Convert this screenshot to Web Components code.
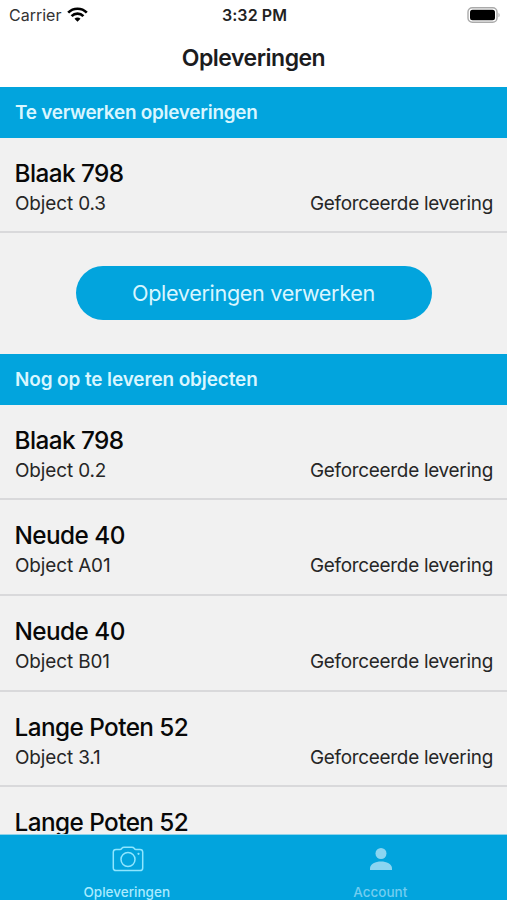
<!DOCTYPE html>
<html lang="nl">
<head>
<meta charset="utf-8">
<title>Opleveringen</title>
<style>
    html, body {
        margin: 0;
        height: 100%;
        overflow: hidden;
    }
    body {
        font-family: Inter, "Liberation Sans", sans-serif;
        color: #111;
        background: #f1f1f1;
        --blauw: #02a4dd;
    }
</style>
</head>
<body>
<oplever-app>
    <status-balk slot="top" carrier="Carrier" tijd="3:32 PM"></status-balk>
    <titel-balk slot="top">Opleveringen</titel-balk>

    <sectie-kop style="letter-spacing: -0.24px">Te verwerken opleveringen</sectie-kop>
    <object-rij adres="Blaak 798" object="Object 0.3">Geforceerde levering</object-rij>
    <verwerk-knop>Opleveringen verwerken</verwerk-knop>

    <sectie-kop>Nog op te leveren objecten</sectie-kop>
    <object-rij adres="Blaak 798" object="Object 0.2">Geforceerde levering</object-rij>
    <object-rij adres="Neude 40" object="Object A01">Geforceerde levering</object-rij>
    <object-rij adres="Neude 40" object="Object B01">Geforceerde levering</object-rij>
    <object-rij adres="Lange Poten 52" object="Object 3.1">Geforceerde levering</object-rij>
    <object-rij adres="Lange Poten 52"></object-rij>

    <tab-balk slot="tabs">
        <tab-item actief>
            <svg slot="icoon" width="34" height="26" viewBox="-2 0 34 26" fill="none" stroke="#8fe6ff" stroke-width="1.5" stroke-linejoin="round">
                <path d="M4 3.400h4.300c1 0 1.300-.4 1.700-1.200.5-.8.9-1 2-1h8c1.100 0 1.500.2 2 1 .4.800.7 1.200 1.700 1.200H28c1.700 0 2.700 1 2.700 2.700v15.800c0 1.700-1 2.700-2.700 2.700H4c-1.700 0-2.700-1-2.700-2.700V6.100C1.300 4.400 2.300 3.400 4 3.400z"/>
                <circle cx="16" cy="13.500" r="7"/>
                <circle cx="26.500" cy="7.800" r="1.100" fill="#8fe6ff" stroke="none"/>
            </svg>
            Opleveringen
        </tab-item>
        <tab-item>
            <svg slot="icoon" width="34" height="26" viewBox="-2 0 34 26" fill="#8bd5f1">
                <circle cx="16" cy="7.500" r="5.500"/>
                <path d="M5 24v-1.700c0-4.100 5.500-6.700 11-6.700s11 2.600 11 6.700V24z"/>
            </svg>
            Account
        </tab-item>
    </tab-balk>
</oplever-app>

<script>
class OpleverApp extends HTMLElement {

    constructor() {
        super();
        const shadow = this.attachShadow({ mode: 'open' });
        shadow.innerHTML = `
            <style>
                :host {
                    display: flex;
                    flex-direction: column;
                    height: 100vh;
                    overflow: hidden;
                }
                .top, .tabs {
                    flex: none;
                }
                .lijst {
                    flex: 1;
                    min-height: 0;
                    overflow: hidden;
                }
            </style>
            <div class="top"><slot name="top"></slot></div>
            <div class="lijst"><slot></slot></div>
            <div class="tabs"><slot name="tabs"></slot></div>
        `;
    }

}

customElements.define('oplever-app', OpleverApp);


class StatusBalk extends HTMLElement {

    connectedCallback() {
        const shadow = this.attachShadow({ mode: 'open' });
        shadow.innerHTML = `
            <style>
                :host {
                    display: grid;
                    grid-template-columns: 1fr auto 1fr;
                    align-items: center;
                    box-sizing: border-box;
                    height: 28px;
                    padding: 1px 7px 0 9px;
                    background: #fff;
                    font-size: 16px;
                    line-height: 20px;
                }
                .links {
                    display: flex;
                    align-items: center;
                    gap: 6px;
                    color: #333;
                }
                .links svg {
                    margin-bottom: 1px;
                }
                .tijd {
                    font-weight: 600;
                    letter-spacing: 0.1px;
                    color: #222;
                }
                .rechts {
                    display: flex;
                    justify-content: flex-end;
                }
                svg {
                    display: block;
                }
            </style>
            <div class="links">
                <span>${this.getAttribute('carrier')}</span>
                <svg width="21" height="15" viewBox="0 0 21 15" fill="none" stroke="#000" stroke-width="2.7">
                    <path d="M1.200 5.600a13.200 13.200 0 0 1 18.600 0"/>
                    <path d="M4.600 9.100a8.300 8.300 0 0 1 11.800 0"/>
                    <path d="M10.500 14.700l-3-3a4.200 4.200 0 0 1 6 0z" fill="#000" stroke="none"/>
                </svg>
            </div>
            <span class="tijd">${this.getAttribute('tijd')}</span>
            <div class="rechts">
                <svg width="33" height="16" viewBox="0 0 33 16">
                    <rect x="1" y=".7" width="29" height="14.6" rx="4.3" fill="#fff" stroke="#aaa" stroke-width="1.4"/>
                    <rect x="3" y="2.7" width="25" height="10.6" rx="2.5" fill="#000"/>
                    <path d="M31.500 5.700c1.500.8 1.500 3.800 0 4.600z" fill="#aaa"/>
                </svg>
            </div>
        `;
    }

}

customElements.define('status-balk', StatusBalk);


class TitelBalk extends HTMLElement {

    constructor() {
        super();
        const shadow = this.attachShadow({ mode: 'open' });
        shadow.innerHTML = `
            <style>
                :host {
                    display: flex;
                    justify-content: center;
                    align-items: center;
                    box-sizing: border-box;
                    height: 59px;
                    background: #fff;
                    font-size: 23px;
                    font-weight: 600;
                    letter-spacing: -0.5px;
                    color: #1c1c1e;
                }
            </style>
            <slot></slot>
        `;
    }

}

customElements.define('titel-balk', TitelBalk);


class SectieKop extends HTMLElement {

    constructor() {
        super();
        const shadow = this.attachShadow({ mode: 'open' });
        shadow.innerHTML = `
            <style>
                :host {
                    display: flex;
                    align-items: center;
                    height: 50.5px;
                    padding: 0 15px;
                    background: var(--blauw);
                    color: #d9f6ff;
                    font-size: 18.9px;
                    font-weight: 600;
                    letter-spacing: -0.08px;
                }
            </style>
            <slot></slot>
        `;
    }

}

customElements.define('sectie-kop', SectieKop);


class ObjectRij extends HTMLElement {

    connectedCallback() {
        const shadow = this.attachShadow({ mode: 'open' });
        shadow.innerHTML = `
            <style>
                :host {
                    display: block;
                    box-sizing: border-box;
                    height: 95.7px;
                    padding: 19px 14px 0 15px;
                    border-bottom: 2px solid #d9d9db;
                }
                .adres {
                    margin-left: -0.5px;
                    font-size: 24.3px;
                    font-weight: 500;
                    letter-spacing: -0.55px;
                    line-height: 32px;
                    color: #080808;
                }
                .regel {
                    display: flex;
                    justify-content: space-between;
                    font-size: 18.9px;
                    letter-spacing: -0.1px;
                    line-height: 29.4px;
                    color: #262626;
                }
                .type {
                    letter-spacing: -0.27px;
                }
            </style>
            <div class="adres">${this.getAttribute('adres')}</div>
            <div class="regel">
                <span>${this.getAttribute('object') || ''}</span>
                <span class="type"><slot></slot></span>
            </div>
        `;
    }

}

customElements.define('object-rij', ObjectRij);


class VerwerkKnop extends HTMLElement {

    constructor() {
        super();
        const shadow = this.attachShadow({ mode: 'open' });
        shadow.innerHTML = `
            <style>
                :host {
                    display: flex;
                    justify-content: center;
                    padding: 33.3px 0 33.7px;
                }
                button {
                    width: 356px;
                    height: 54px;
                    padding: 0;
                    border: none;
                    border-radius: 27px;
                    background: var(--blauw);
                    color: #d9f6ff;
                    font: inherit;
                    font-size: 21.6px;
                    letter-spacing: -0.33px;
                    cursor: pointer;
                }
            </style>
            <button><slot></slot></button>
        `;
    }

}

customElements.define('verwerk-knop', VerwerkKnop);


class TabBalk extends HTMLElement {

    constructor() {
        super();
        const shadow = this.attachShadow({ mode: 'open' });
        shadow.innerHTML = `
            <style>
                :host {
                    display: flex;
                    box-sizing: border-box;
                    height: 66px;
                    border-top: 1px solid #8fd3ea;
                    background: var(--blauw);
                }
                ::slotted(tab-item) {
                    flex: 1;
                }
            </style>
            <slot></slot>
        `;
    }

}

customElements.define('tab-balk', TabBalk);


class TabItem extends HTMLElement {

    constructor() {
        super();
        const shadow = this.attachShadow({ mode: 'open' });
        shadow.innerHTML = `
            <style>
                :host {
                    display: flex;
                    flex-direction: column;
                    align-items: center;
                    padding-top: 11px;
                    font-size: 13.5px;
                    font-weight: 500;
                    line-height: 16px;
                    color: #72cdf0;
                }
                :host([actief]) {
                    color: #a9ebff;
                }
                .label {
                    margin-top: 12px;
                }
                ::slotted(svg) {
                    display: block;
                }
            </style>
            <slot name="icoon"></slot>
            <span class="label"><slot></slot></span>
        `;
    }

}

customElements.define('tab-item', TabItem);
</script>
</body>
</html>
